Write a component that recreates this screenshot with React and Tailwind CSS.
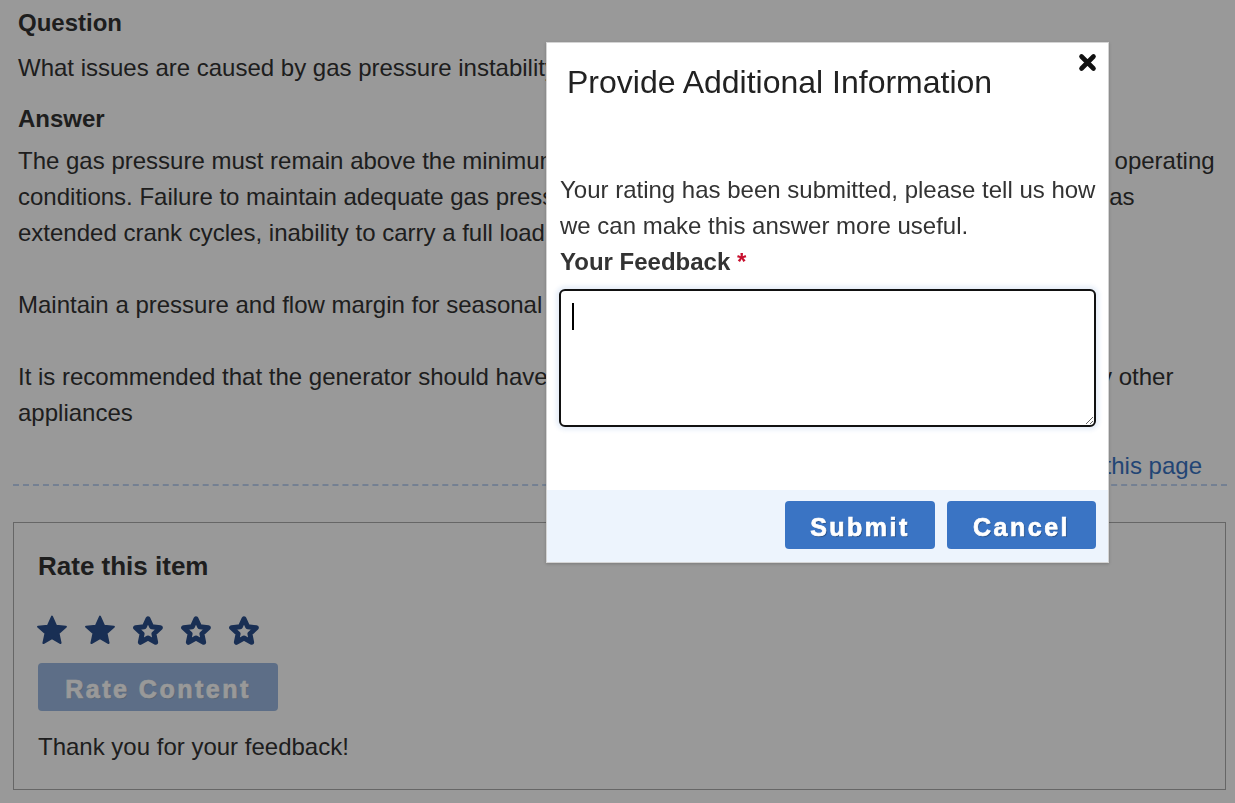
import React from 'react';

const FONT = { fontFamily: '"Liberation Sans", Arial, sans-serif' };

function starPoints(R, r, cx, cy) {
  const pts = [];
  for (let k = 0; k < 10; k++) {
    const a = ((-90 + k * 36) * Math.PI) / 180;
    const rad = k % 2 === 0 ? R : r;
    pts.push(`${(cx + rad * Math.cos(a)).toFixed(2)},${(cy + rad * Math.sin(a)).toFixed(2)}`);
  }
  return pts.join(' ');
}

function Star({ filled }) {
  return (
    <svg width="30" height="31" viewBox="0 0 30 31" className="shrink-0">
      {filled ? (
        <polygon
          points={starPoints(14.6, 6.9, 15, 16.2)}
          fill="#2b4f8c"
          stroke="#2b4f8c"
          strokeWidth="2"
          strokeLinejoin="round"
        />
      ) : (
        <polygon
          points={starPoints(13, 6.2, 15, 16.8)}
          fill="none"
          stroke="#2b4f8c"
          strokeWidth="5"
          strokeLinejoin="round"
        />
      )}
    </svg>
  );
}

const BTN =
  'h-[48px] rounded-[4px] bg-[#3a74c4] pt-[5px] text-[25px] font-bold tracking-[2.5px] text-white [-webkit-text-stroke:0.7px_white] [text-shadow:1px_1px_1px_rgba(0,0,0,0.35)]';

function Page() {
  return (
    <div className="pl-[13px] pr-[8px] pt-[5px] pb-[20px] text-[#333]" style={FONT}>
      <div className="px-[5px]">
        <h3 className="text-[24px] font-bold leading-[36px]">Question</h3>
        <p className="mt-[9px] text-[24px] leading-[36px]">
          What issues are caused by gas pressure instability?
        </p>
        <h3 className="mt-[15px] text-[24px] font-bold leading-[36px]">Answer</h3>
        <p className="mt-[6px] text-[24px] leading-[36px]">
          The gas pressure must remain above the minimum required by the manufacturer under all its expected operating
          <br />
          conditions. Failure to maintain adequate gas pressure will result in significant operating problems such as
          <br />
          extended crank cycles, inability to carry a full load, and unexpected engine shutdowns.
          <br />
          <br />
          Maintain a pressure and flow margin for seasonal demand changes.
          <br />
          <br />
          It is recommended that the generator should have a dedicated gas supply line, one not shared with any other
          <br />
          appliances
        </p>
        <div className="mt-[17px] pr-[20px] text-right text-[24px] leading-[36px] text-[#3a74c4]">
          Print this page
        </div>
      </div>
      <div className="border-b-2 border-dashed border-[#c2d5f3]" />

      <div className="mt-[36px] mr-px border border-[#aaa] pl-[24px] pt-[25px] pb-[24px]">
        <h3 className="text-[26px] font-bold leading-[36px]">Rate this item</h3>
        <div className="mt-[31px] flex gap-[18px] -ml-px">
          <Star filled />
          <Star filled />
          <Star />
          <Star />
          <Star />
        </div>
        <button disabled className={`mt-[17px] w-[240px] opacity-50 ${BTN}`} style={FONT}>
          Rate Content
        </button>
        <p className="mt-[18px] text-[24px] leading-[36px]">Thank you for your feedback!</p>
      </div>
    </div>
  );
}

function Modal() {
  return (
    <div
      className="fixed left-[546px] top-[42px] z-50 flex h-[521px] w-[563px] flex-col border border-[#d4d4d4] bg-white shadow-[0_1px_3px_rgba(0,0,0,0.2)]"
      style={FONT}
    >
      <div className="relative h-[110px] pl-[20px] pt-[19px]">
        <h2 className="text-[32px] font-normal leading-[40px] text-[#222]">
          Provide Additional Information
        </h2>
        <button className="absolute right-[11px] top-[10px] h-[19px] w-[19px]" aria-label="Close">
          <svg viewBox="0 0 19 19" width="19" height="19">
            <path d="M3.5 3.5 L15.5 15.5 M15.5 3.5 L3.5 15.5" stroke="#111" strokeWidth="4.6" strokeLinecap="round" />
          </svg>
        </button>
      </div>

      <div className="flex-1 pl-[13px] pr-[10px] pt-[19px] text-[#333]">
        <p className="text-[24px] leading-[36px]">
          Your rating has been submitted, please tell us how we can make this answer more useful.
        </p>
        <label className="block text-[24px] font-bold leading-[36px]">
          Your Feedback <span className="text-[#c8102e]">*</span>
        </label>
        <div className="relative mt-[9px] -ml-px w-[537px]">
          <textarea
            className="block h-[138px] w-full resize-y rounded-[6px] border-[2.5px] border-[#111] bg-white px-[12px] py-[10px] text-[24px] outline-none shadow-[0_0_4px_3px_rgba(58,116,196,0.12)]"
            style={FONT}
          />
          <span className="pointer-events-none absolute left-[13px] top-[14px] h-[27px] w-[2px] bg-black" />
        </div>
      </div>

      <div className="flex h-[72px] items-start justify-end gap-[12px] bg-[#edf4fd] pr-[12px] pt-[11px]">
        <button className={`w-[150px] ${BTN}`} style={FONT}>
          Submit
        </button>
        <button className={`w-[149px] ${BTN}`} style={FONT}>
          Cancel
        </button>
      </div>
    </div>
  );
}

export default function App() {
  return (
    <div className="min-h-screen bg-white">
      <Page />
      <div className="fixed inset-0 z-40 bg-black/40" />
      <Modal />
    </div>
  );
}
